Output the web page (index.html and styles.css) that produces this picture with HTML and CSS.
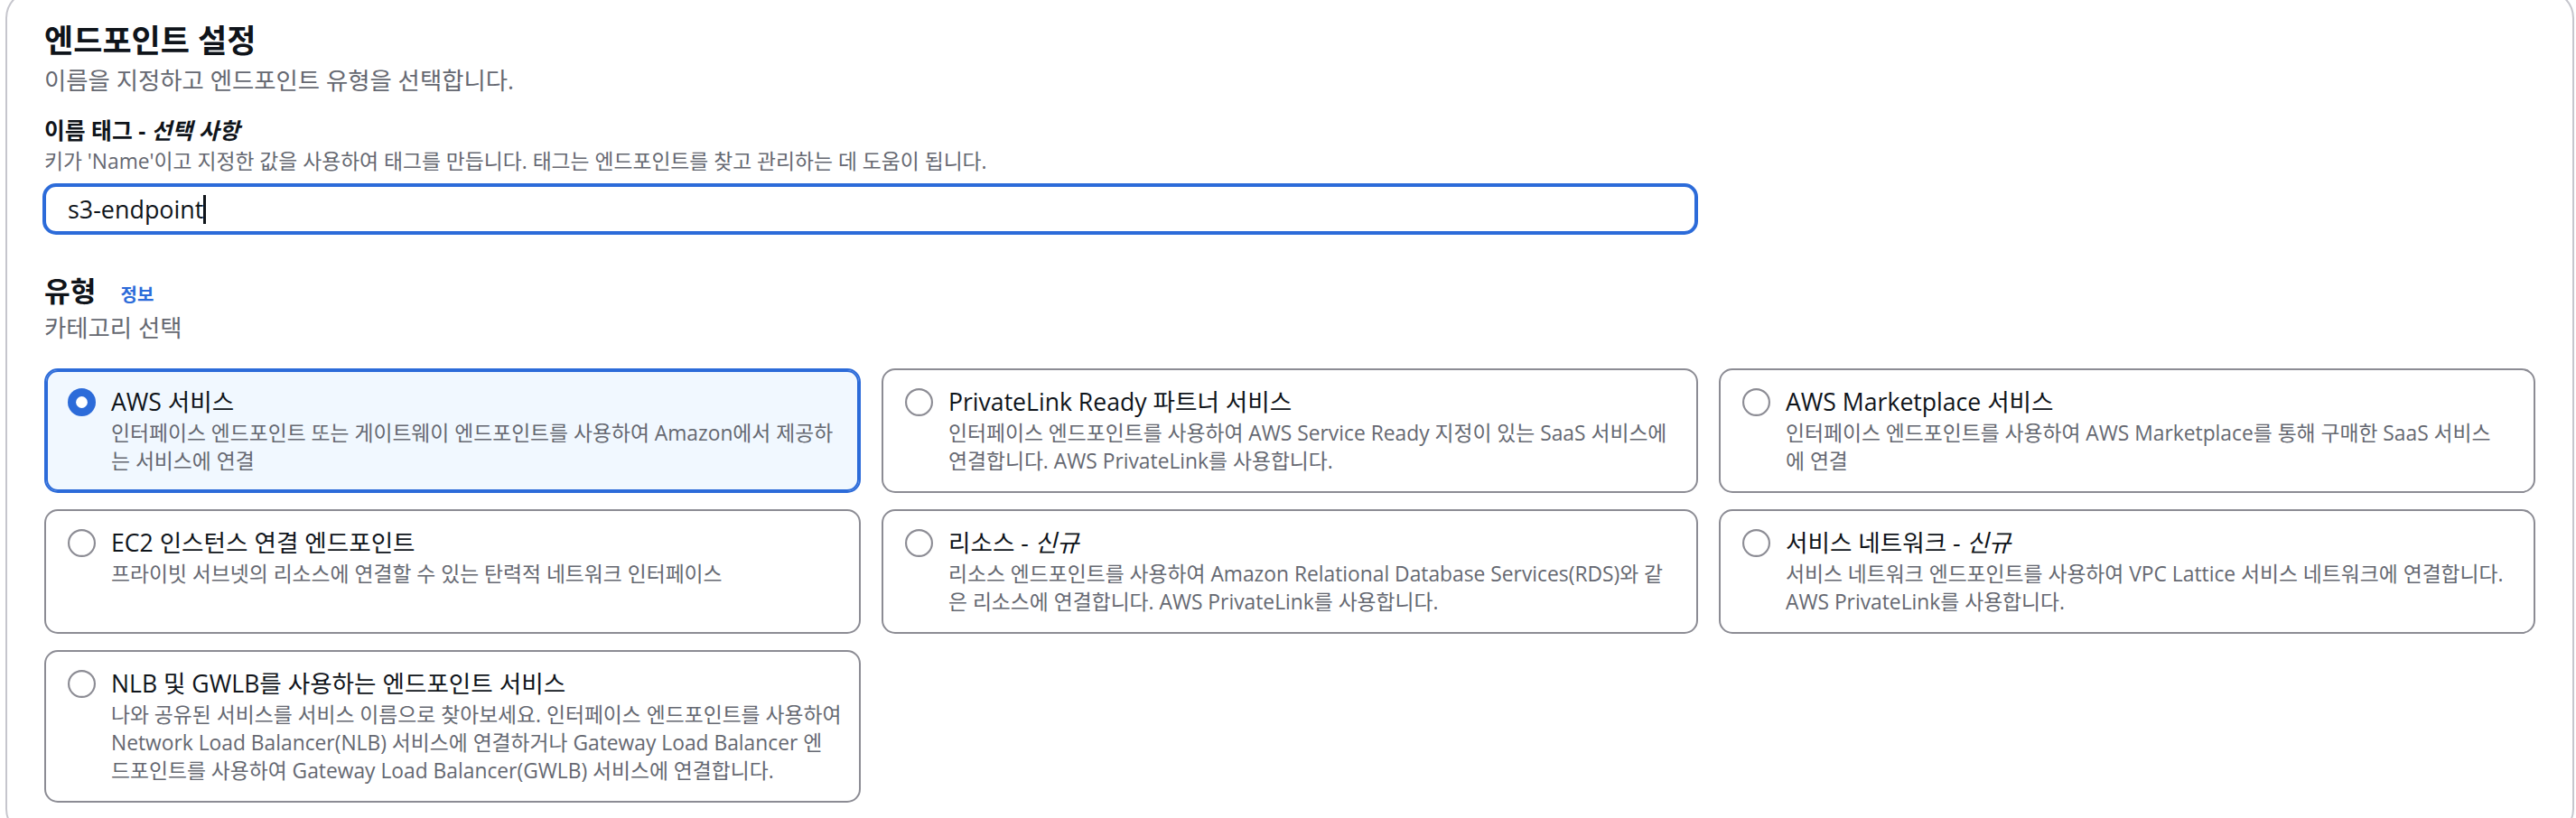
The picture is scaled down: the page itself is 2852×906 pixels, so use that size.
FILE: index.html
```html
<!DOCTYPE html>
<html lang="ko">
<head>
<meta charset="utf-8">
<title>엔드포인트 설정</title>
<link rel="stylesheet" href="styles.css">
</head>
<body>
<section class="container">
  <header class="head">
    <h2 class="title">엔드포인트 설정</h2>
    <p class="desc">이름을 지정하고 엔드포인트 유형을 선택합니다.</p>
  </header>

  <div class="field">
    <label class="label">이름 태그 - <i>선택 사항</i></label>
    <p class="constraint">키가 'Name'이고 지정한 값을 사용하여 태그를 만듭니다. 태그는 엔드포인트를 찾고 관리하는 데 도움이 됩니다.</p>
    <div class="input-row">
      <div class="input"><span class="input-text">s3-endpoint</span><span class="caret"></span></div>
    </div>
  </div>

  <div class="type-head">
    <h3 class="subtitle">유형 <a class="info">정보</a></h3>
    <p class="desc">카테고리 선택</p>
  </div>

  <div class="tiles">
    <div class="tile selected">
      <svg class="radio" viewBox="0 0 16 16"><circle cx="8" cy="8" r="8" fill="#2c6bd9"/><circle cx="8" cy="8" r="3.3" fill="#fff"/></svg>
      <div class="tile-body">
        <div class="tile-label">AWS 서비스</div>
        <div class="tile-desc">인터페이스 엔드포인트 또는 게이트웨이 엔드포인트를 사용하여 Amazon에서 제공하<br>는 서비스에 연결</div>
      </div>
    </div>
    <div class="tile">
      <svg class="radio" viewBox="0 0 16 16"><circle cx="8" cy="8" r="7.45" fill="#fff" stroke="#8c8c94" stroke-width="1.1"/></svg>
      <div class="tile-body">
        <div class="tile-label">PrivateLink Ready 파트너 서비스</div>
        <div class="tile-desc">인터페이스 엔드포인트를 사용하여 AWS Service Ready 지정이 있는 SaaS 서비스에<br>연결합니다. AWS PrivateLink를 사용합니다.</div>
      </div>
    </div>
    <div class="tile">
      <svg class="radio" viewBox="0 0 16 16"><circle cx="8" cy="8" r="7.45" fill="#fff" stroke="#8c8c94" stroke-width="1.1"/></svg>
      <div class="tile-body">
        <div class="tile-label">AWS Marketplace 서비스</div>
        <div class="tile-desc">인터페이스 엔드포인트를 사용하여 AWS Marketplace를 통해 구매한 SaaS 서비스<br>에 연결</div>
      </div>
    </div>
    <div class="tile">
      <svg class="radio" viewBox="0 0 16 16"><circle cx="8" cy="8" r="7.45" fill="#fff" stroke="#8c8c94" stroke-width="1.1"/></svg>
      <div class="tile-body">
        <div class="tile-label">EC2 인스턴스 연결 엔드포인트</div>
        <div class="tile-desc">프라이빗 서브넷의 리소스에 연결할 수 있는 탄력적 네트워크 인터페이스</div>
      </div>
    </div>
    <div class="tile">
      <svg class="radio" viewBox="0 0 16 16"><circle cx="8" cy="8" r="7.45" fill="#fff" stroke="#8c8c94" stroke-width="1.1"/></svg>
      <div class="tile-body">
        <div class="tile-label">리소스 - <i>신규</i></div>
        <div class="tile-desc">리소스 엔드포인트를 사용하여 Amazon Relational Database Services(RDS)와 같<br>은 리소스에 연결합니다. AWS PrivateLink를 사용합니다.</div>
      </div>
    </div>
    <div class="tile">
      <svg class="radio" viewBox="0 0 16 16"><circle cx="8" cy="8" r="7.45" fill="#fff" stroke="#8c8c94" stroke-width="1.1"/></svg>
      <div class="tile-body">
        <div class="tile-label">서비스 네트워크 - <i>신규</i></div>
        <div class="tile-desc">서비스 네트워크 엔드포인트를 사용하여 VPC Lattice 서비스 네트워크에 연결합니다.<br>AWS PrivateLink를 사용합니다.</div>
      </div>
    </div>
    <div class="tile">
      <svg class="radio" viewBox="0 0 16 16"><circle cx="8" cy="8" r="7.45" fill="#fff" stroke="#8c8c94" stroke-width="1.1"/></svg>
      <div class="tile-body">
        <div class="tile-label">NLB 및 GWLB를 사용하는 엔드포인트 서비스</div>
        <div class="tile-desc">나와 공유된 서비스를 서비스 이름으로 찾아보세요. 인터페이스 엔드포인트를 사용하여<br>Network Load Balancer(NLB) 서비스에 연결하거나 Gateway Load Balancer 엔<br>드포인트를 사용하여 Gateway Load Balancer(GWLB) 서비스에 연결합니다.</div>
      </div>
    </div>
  </div>
</section>
</body>
</html>
```

FILE: styles.css
```css
html, body {
  margin: 0;
  padding: 0;
  background: #ffffff;
}

body {
  font-family: "Open Sans", "Noto Sans CJK KR", sans-serif;
  color: #0f141a;
}

.container {
  margin: -11px 2px 0 6px;
  border: 2px solid #c6c6cd;
  border-radius: 31px;
  padding: 31px 41px 36px 41px;
  background: #ffffff;
}

.title {
  margin: 0 0 2px 0;
  font-size: 35px;
  line-height: 46px;
  font-weight: 700;
  color: #0f141a;
}

.desc {
  margin: 0;
  font-size: 26.4px;
  line-height: 38px;
  color: #656871;
}

.field {
  margin-top: 17px;
}

.label {
  display: block;
  font-size: 24.8px;
  line-height: 38px;
  font-weight: 700;
  color: #0f141a;
}

.label i {
  font-style: italic;
}

.constraint {
  margin: 0;
  font-size: 22.8px;
  line-height: 31px;
  color: #656871;
}

.input-row {
  margin-top: 9px;
  display: grid;
  grid-template-columns: repeat(3, 1fr);
  column-gap: 23px;
}

.input {
  grid-column: span 2;
  box-sizing: border-box;
  height: 57px;
  margin-left: -2px;
  border: 4px solid #2c6bd9;
  border-radius: 15px;
  padding: 0 24px;
  display: flex;
  align-items: center;
  background: #ffffff;
}

.input-text {
  font-size: 26.9px;
  line-height: 38px;
  color: #0f141a;
}

.caret {
  display: inline-block;
  width: 3px;
  height: 32px;
  background: #0f141a;
}

.type-head {
  margin-top: 45px;
}

.subtitle {
  margin: 0;
  font-size: 31.2px;
  line-height: 34px;
  font-weight: 700;
  color: #0f141a;
}

.info {
  margin-left: 19px;
  font-size: 20px;
  font-weight: 700;
  color: #2c6bd9;
  text-decoration: none;
}

.tiles {
  margin-top: 26px;
  display: grid;
  grid-template-columns: repeat(3, 1fr);
  column-gap: 23px;
  row-gap: 18px;
}

.tile {
  display: flex;
  align-items: flex-start;
  gap: 17px;
  border: 2px solid #8c8c94;
  border-radius: 15px;
  padding: 16px 16px 18px 24px;
  background: #ffffff;
}

.tile.selected {
  border-color: #2c6bd9;
  box-shadow: inset 0 0 0 2px #2c6bd9;
  background: #f1f8ff;
}

.radio {
  flex: none;
  width: 31px;
  height: 31px;
  margin-top: 4px;
}

.tile-body {
  min-width: 0;
}

.tile-label {
  font-size: 26.6px;
  line-height: 38px;
  color: #0f141a;
  white-space: nowrap;
}

.tile-desc {
  font-size: 22.8px;
  line-height: 31px;
  color: #656871;
  white-space: nowrap;
}
```
